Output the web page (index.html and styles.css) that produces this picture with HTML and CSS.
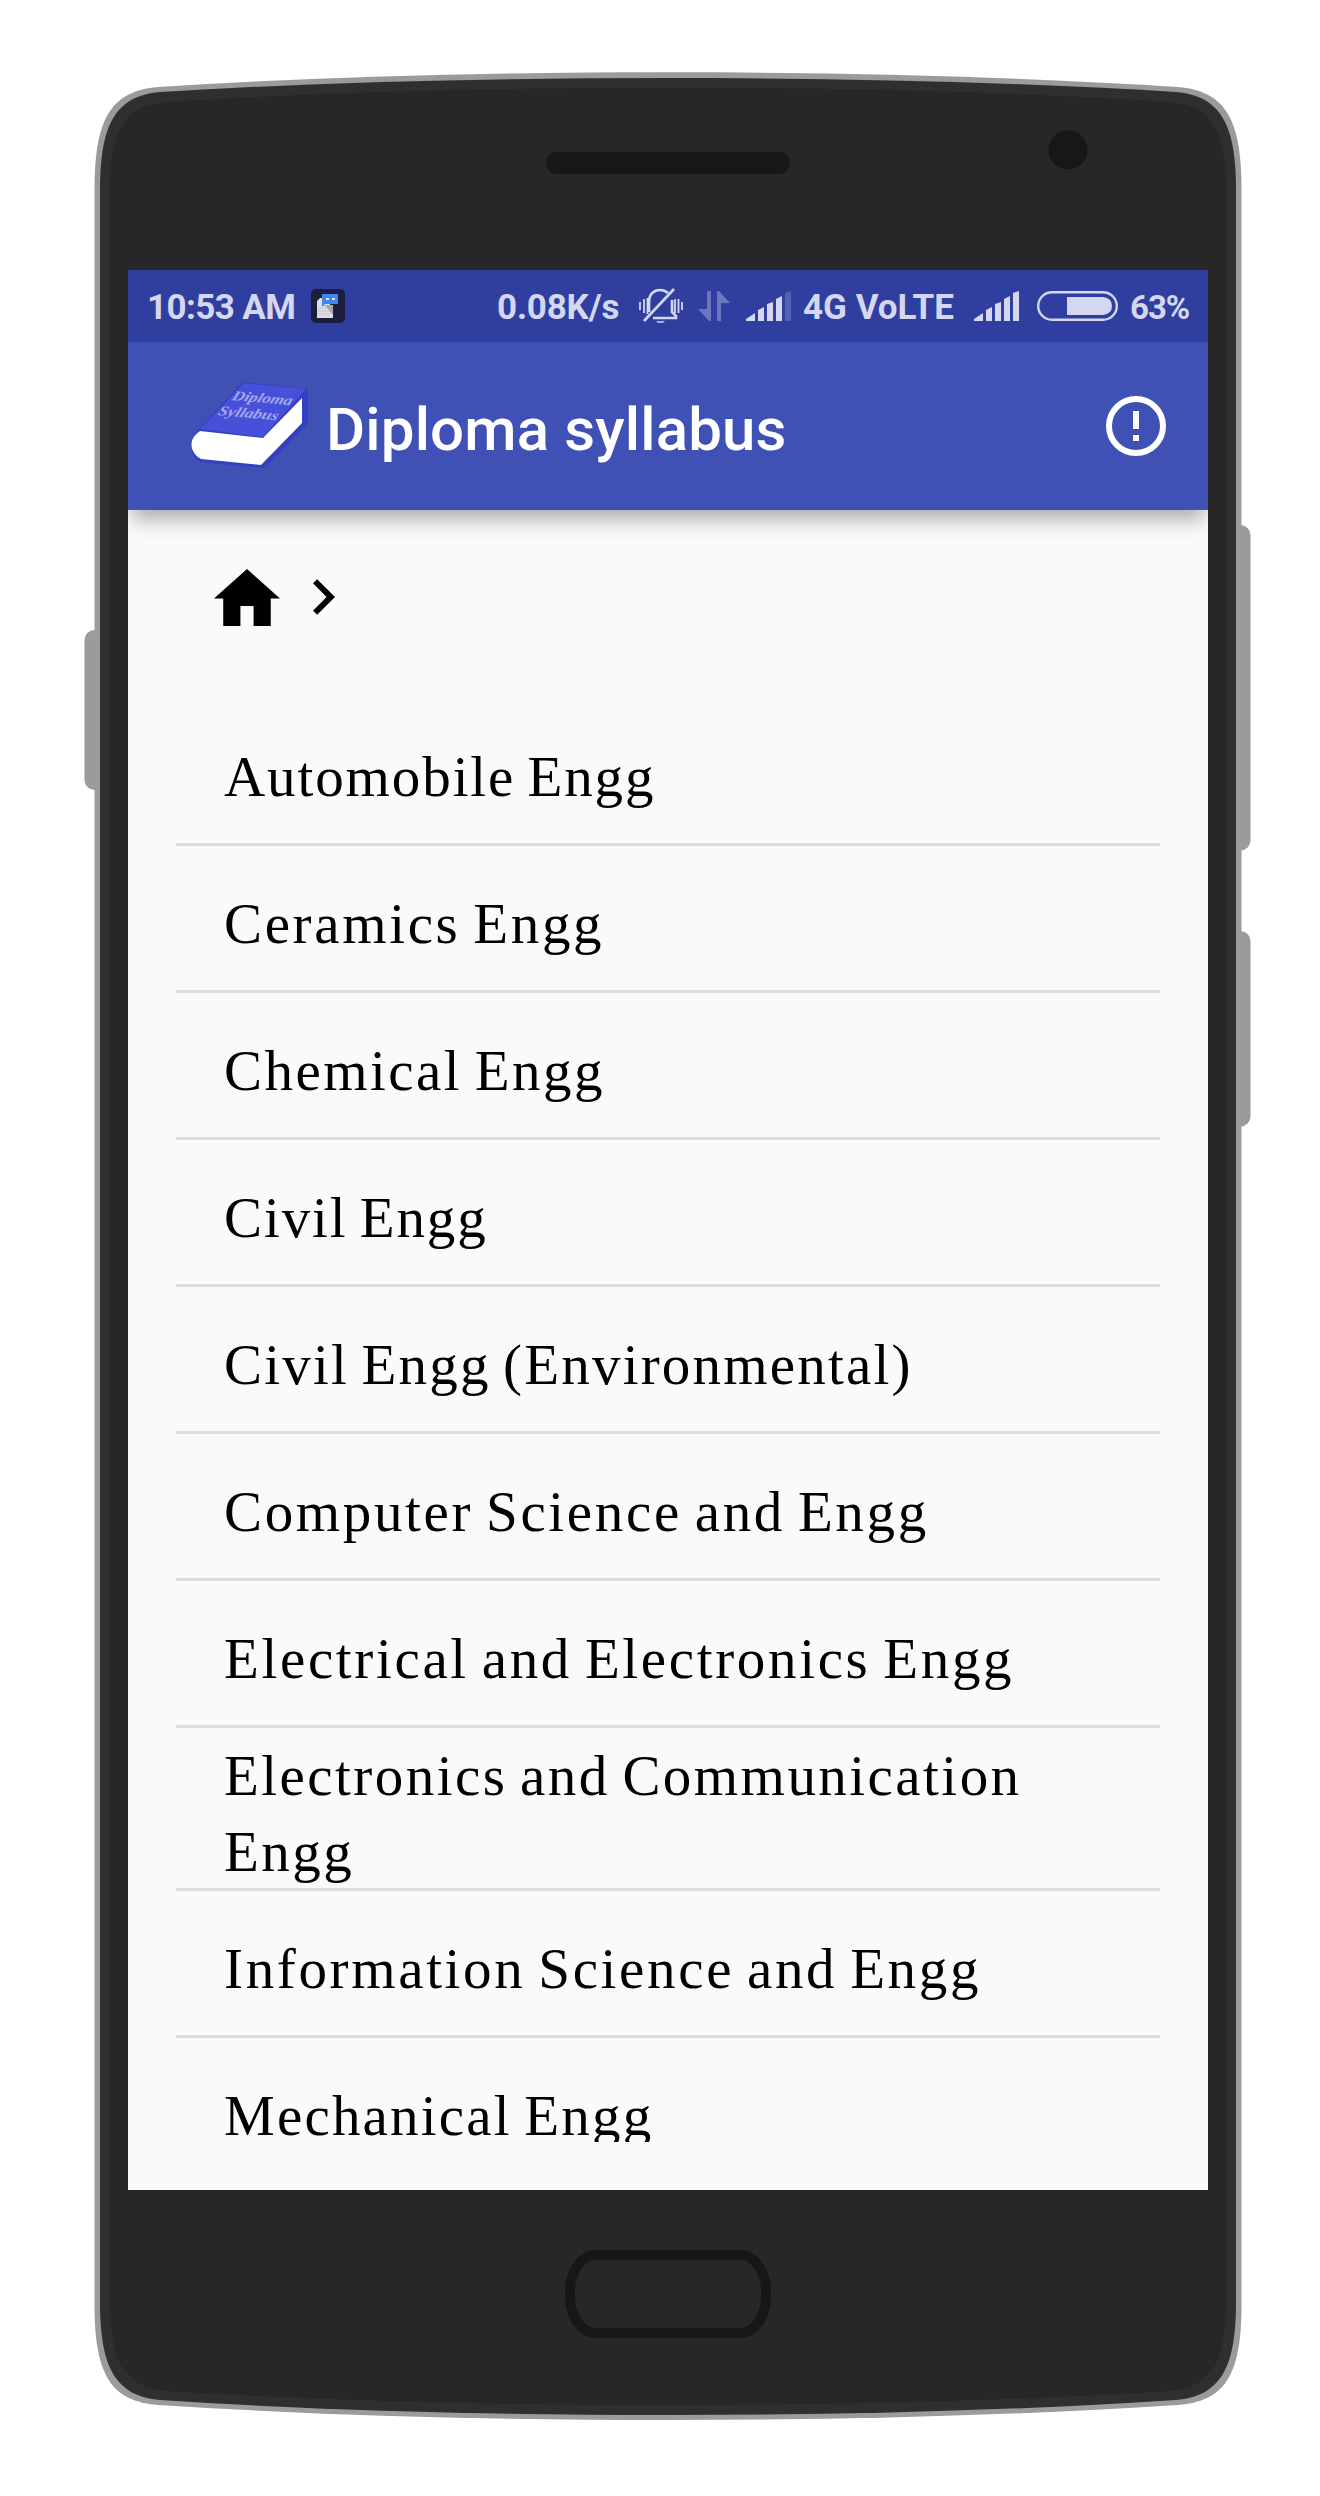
FILE: index.html
```html
<!DOCTYPE html>
<html lang="en">
<head>
<meta charset="utf-8">
<title>Diploma syllabus</title>
<link rel="stylesheet" href="styles.css">
</head>
<body>
<div class="phone">
  <svg class="frame" viewBox="0 0 1320 2496" aria-hidden="true">
    <g fill="#9b9b9b">
      <rect x="84.500" y="630" width="30" height="160" rx="10"/>
      <rect x="1220" y="525" width="30.500" height="325.500" rx="10"/>
      <rect x="1220" y="931" width="30.500" height="195.500" rx="10"/>
      <path d="M94.500 190C94.500 120 110 91 158 87C330 76 500 72.300 668 72.300S1006 76 1178 87C1226 91 1241.500 120 1241.500 190V2304C1241.500 2374 1226 2401 1178 2405C1006 2416 836 2420 668 2420S330 2416 158 2405C110 2401 94.500 2374 94.500 2304Z"/>
    </g>
    <path fill="#2f2f2f" d="M100 190C100 125 115 96 160 92C330 81.500 500 78 668 78S1006 81.500 1176 92C1221 96 1236 125 1236 190V2302C1236 2367 1221 2396 1176 2400C1006 2411 836 2415 668 2415S330 2411 160 2400C115 2396 100 2367 100 2302Z"/>
    <path fill="#272727" d="M110 190C110 135 121 106 166 102C330 91.500 500 87.700 668 87.700S1006 91.500 1170 102C1215 106 1226 135 1226 190V2302C1226 2357 1215 2387 1170 2391C1006 2401 836 2405 668 2405S330 2401 166 2391C121 2387 110 2357 110 2302Z"/>
    <rect x="546" y="152" width="244" height="22" rx="11" fill="#171717"/>
    <circle cx="1068" cy="150" r="19.500" fill="#171717"/>
    <rect x="570" y="2255" width="196" height="78" rx="25" ry="37" fill="none" stroke="#171717" stroke-width="10"/>
  </svg>

  <main class="screen">
    <div class="status">
      <span class="status-text clock">10:53 AM</span>
      <svg class="sim" viewBox="0 0 34 34">
        <rect width="34" height="34" rx="5" fill="#1b1e3d"/>
        <path d="M9 9h10v7h3v13H6V12z" fill="#dfdfdf"/>
        <path d="M13 16h9v10z" fill="#aaa"/>
        <path d="M6 19h10M6 22h12M6 25h14" stroke="#c4c6c8"/>
        <path d="M11 5h16v10H14l-3 3z" fill="#4284f3"/>
        <path d="M15 9h3v2h-3zM21 9h3v2h-3z" fill="#dce8ff"/>
      </svg>
      <span class="status-text speed">0.08K/s</span>
      <svg class="bell" viewBox="0 0 44 36" fill="none" stroke="#d4d7ef" stroke-width="2.600">
        <path d="M10 24V14C10 6 15 2 21 2Q26 2 29 5M33 12V24L37 28V30H14"/>
        <path d="M35 1L5 33"/>
        <path d="M1 14V22M5 11V25M8.500 10V26M36 11V25M39.500 11V25M43 14V22" stroke-width="1.800"/>
        <path d="M17 33H26L24 35H19Z" fill="#aeb4df" stroke="none"/>
      </svg>
      <svg class="arrows" viewBox="0 0 32 30" fill="#6d76bd">
        <path d="M9 0H13V30H11L0 18H9ZM19 30H23V12H32L21 0H19Z"/>
      </svg>
      <svg class="signal" viewBox="0 0 46 30" fill="#d4d7ef">
        <path d="M0 30V28L9 22V30ZM12 19L18 16V30H12ZM21 13L27 11V30H21ZM30 8L36 5V30H30Z"/>
        <path d="M39 2L45 0V30H39Z" fill="#5560b0"/>
      </svg>
      <span class="status-text network">4G VoLTE</span>
      <svg class="signal signal-full" viewBox="0 0 46 30" fill="#d4d7ef">
        <path d="M0 30V28L9 22V30ZM12 19L18 16V30H12ZM21 13L27 11V30H21ZM30 8L36 5V30H30ZM39 2L45 0V30H39Z"/>
      </svg>
      <svg class="battery" viewBox="0 0 81 30">
        <rect x="1.200" y="1.200" width="78.600" height="27.600" rx="13.800" fill="none" stroke="#d4d7ef" stroke-width="2.400"/>
        <path d="M30 6H66Q75 7 75 15T66 24H30Z" fill="#d4d7ef"/>
      </svg>
      <span class="status-text percent">63%</span>
    </div>

    <header class="appbar">
      <svg class="book" viewBox="0 0 124 90">
        <path d="M9 49L54 1L119 8V42L76 87L12 81C-1 75 0 57 9 49Z" fill="#343fc4"/>
        <path d="M11 48L55 2L117 8L74 56Z" fill="#4750d8"/>
        <path d="M11 50L74 57L113 17V42L72 84L12 78C-1 70 0 57 11 50Z" fill="#fff"/>
        <g class="cover-text">
          <text transform="translate(42 19) rotate(5) skewX(-18)" textLength="60" lengthAdjust="spacingAndGlyphs">Diploma</text>
          <text transform="translate(28 34) rotate(5) skewX(-18)" textLength="60" lengthAdjust="spacingAndGlyphs">Syllabus</text>
        </g>
      </svg>
      <h1 class="title">Diploma syllabus</h1>
      <svg class="info" viewBox="0 0 60 60">
        <circle cx="30" cy="30" r="27" fill="none" stroke="#fff" stroke-width="6"/>
        <path d="M27 15H33V33H27ZM27 39H33V45H27Z" fill="#fff"/>
      </svg>
    </header>

    <nav class="crumbs">
      <svg class="home" viewBox="2 3 20 17" preserveAspectRatio="none"><path d="M10 20v-6h4v6h5.200v-8.200h2.800L12 3 2 11.800h2.800V20z"/></svg>
      <svg class="chevron" viewBox="8.590 6 7.410 12"><path d="M10 6L8.590 7.410 13.170 12l-4.580 4.590L10 18l6-6z"/></svg>
    </nav>

    <ul class="list">
      <li class="row narrow">Automobile Engg</li>
      <li class="row wide">Ceramics Engg</li>
      <li class="row">Chemical Engg</li>
      <li class="row narrow">Civil Engg</li>
      <li class="row snug">Civil Engg (Environmental)</li>
      <li class="row wide">Computer Science and Engg</li>
      <li class="row wide">Electrical and Electronics Engg</li>
      <li class="row row-wrap">Electronics and Communication Engg</li>
      <li class="row wide">Information Science and Engg</li>
      <li class="row snug">Mechanical Engg</li>
    </ul>
  </main>
</div>
</body>
</html>
```
FILE: styles.css
```css
* { box-sizing: border-box; }

body {
  margin: 0;
  background: #fff;
}

.phone {
  position: relative;
  width: 1320px;
  height: 2496px;
  padding: 270px 112px 306px 128px;
}

.frame {
  position: absolute;
  inset: 0;
  width: 1320px;
  height: 2496px;
}

.screen {
  position: relative;
  display: flex;
  flex-direction: column;
  width: 1080px;
  height: 1920px;
  overflow: hidden;
  background: #fafafa;
}

.screen svg { display: block; flex: none; }

/* Status bar */
.status {
  display: flex;
  align-items: center;
  height: 72px;
  flex: none;
  padding-left: 19px;
  background: #303f9f;
  font-family: Roboto, sans-serif;
  font-weight: 700;
  color: #d4d7ef;
}

.status-text {
  flex: none;
  font-size: 35px;
  line-height: 72px;
  white-space: nowrap;
  padding-top: 4px;
}

.clock { width: 164px; letter-spacing: -0.6px; }
.sim { width: 34px; height: 34px; }
.speed { width: 142px; margin-left: 152px; letter-spacing: -0.2px; }
.bell { width: 44px; height: 36px; }
.arrows { width: 32px; height: 30px; margin-left: 15px; }
.signal { width: 46px; height: 30px; margin-left: 16px; }
.network { width: 170px; margin-left: 11px; }
.signal-full { margin-left: 1px; }
.battery { width: 81px; height: 30px; margin-left: 17px; }
.percent { margin-left: 12px; font-size: 33px; letter-spacing: -1px; }

/* App bar */
.appbar {
  display: flex;
  align-items: center;
  position: relative;
  height: 168px;
  flex: none;
  padding: 0 42px 0 61px;
  background: #3f51b5;
  box-shadow: 0 14px 18px -4px rgba(0, 0, 0, 0.3);
}

.book {
  width: 124px;
  height: 90px;
}

.cover-text {
  font: italic 700 14px "Liberation Serif", serif;
  fill: #a3a8ee;
}

.title {
  flex: 1;
  margin: 7px 0 0 13px;
  font: 500 60px/70px Roboto, sans-serif;
  letter-spacing: 0.15px;
  color: #fff;
  white-space: nowrap;
}

.info { width: 60px; height: 60px; }

/* Breadcrumbs */
.crumbs {
  display: flex;
  align-items: center;
  gap: 33px;
  height: 189px;
  flex: none;
  padding: 0 0 15px 86px;
}

.home { width: 66px; height: 57px; }
.chevron { width: 22px; height: 36px; }

/* Syllabus branches */
.list {
  height: 1443px;
  flex: none;
  margin: 0 48px;
  padding: 0;
  overflow: hidden;
  list-style: none;
}

.row {
  height: 147px;
  padding: 40px 48px 0;
  border-bottom: 3px solid #dcdcdc;
  font: 57px/76px "Liberation Serif", serif;
  letter-spacing: 2.45px;
  word-spacing: -4px;
  color: #000;
}

.narrow { letter-spacing: 1.9px; }
.snug { letter-spacing: 2.2px; }
.wide { letter-spacing: 2.65px; }

.row-wrap {
  height: 163px;
  padding-top: 10px;
}
```
